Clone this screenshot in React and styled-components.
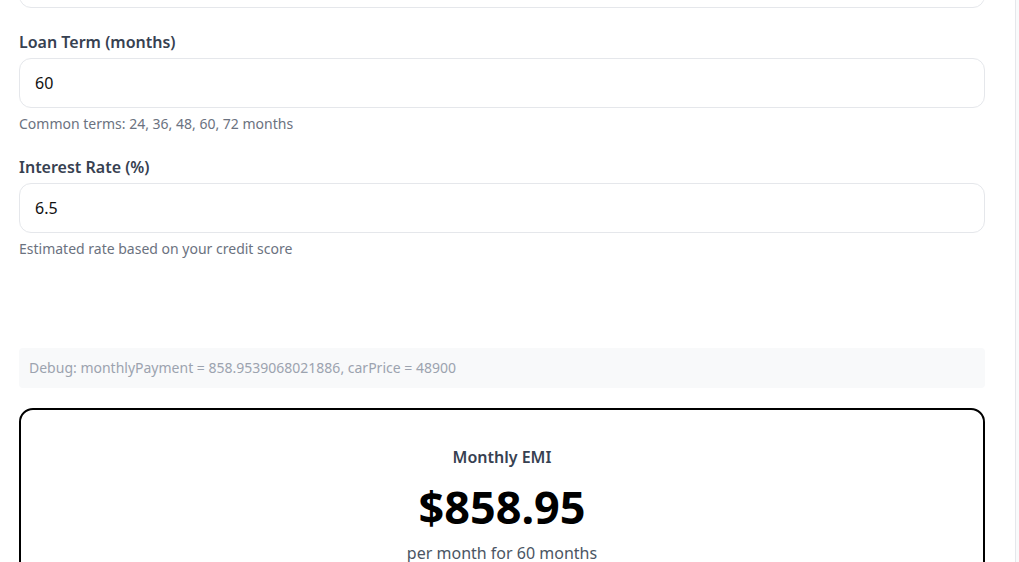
import React from 'react';
import styled, { createGlobalStyle } from 'styled-components';

const GlobalStyle = createGlobalStyle`
  * {
    box-sizing: border-box;
  }
  body {
    margin: 0;
    background: #f9fafb;
    font-family: "Noto Sans", "Open Sans", Arial, sans-serif;
    color: #111827;
  }
`;

const Panel = styled.div`
  width: 1016px;
  min-height: 100vh;
  background: #ffffff;
  border-right: 1px solid #e5e7eb;
  padding: 0 30px 40px 19px;
  overflow: hidden;
`;

const Field = styled.div`
  display: flex;
  flex-direction: column;
  margin-top: ${p => (p.$clipped ? '-42px' : '0')};
  margin-bottom: ${p => p.$gap || '21px'};
`;

const Label = styled.label`
  font-size: 16px;
  line-height: 24px;
  font-weight: 600;
  color: #374151;
  margin-bottom: 4px;
`;

const Input = styled.input`
  width: 100%;
  height: 50px;
  padding: 0 15px;
  font-family: inherit;
  font-size: 16px;
  color: #111111;
  background: #ffffff;
  border: 1px solid #e5e7eb;
  border-radius: 12px;
  outline: none;
`;

const Hint = styled.div`
  margin-top: 6px;
  font-size: 14px;
  line-height: 20px;
  color: #6b7280;
`;

const Debug = styled.div`
  background: #f8f9fa;
  border-radius: 4px;
  padding: 10px;
  font-size: 14px;
  line-height: 20px;
  color: #9ca3af;
  margin-bottom: 20px;
`;

const ResultCard = styled.div`
  border: 2px solid #000000;
  border-radius: 14px;
  padding: 35px 24px 32px;
  display: flex;
  flex-direction: column;
  align-items: center;
  text-align: center;
`;

const ResultLabel = styled.div`
  font-size: 16px;
  line-height: 24px;
  font-weight: 600;
  color: #374151;
`;

const Amount = styled.div`
  font-size: 45px;
  line-height: 56px;
  font-weight: 700;
  color: #000000;
  margin-top: 10px;
`;

const Sub = styled.div`
  font-size: 16px;
  line-height: 24px;
  color: #4b5563;
  margin-top: 6px;
`;

const fields = [
  { label: 'Loan Term (months)', value: '60', hint: 'Common terms: 24, 36, 48, 60, 72 months', gap: '21px' },
  { label: 'Interest Rate (%)', value: '6.5', hint: 'Estimated rate based on your credit score', gap: '89px' },
];

const App = () => {
  const monthlyPayment = 858.9539068021886;
  const carPrice = 48900;

  return (
    <>
      <GlobalStyle />
      <Panel>
        <Field $clipped $gap="22px">
          <Input defaultValue="10000" readOnly />
        </Field>
        {fields.map(f => (
          <Field key={f.label} $gap={f.gap}>
            <Label>{f.label}</Label>
            <Input defaultValue={f.value} readOnly />
            <Hint>{f.hint}</Hint>
          </Field>
        ))}
        <Debug>
          Debug: monthlyPayment = {monthlyPayment}, carPrice = {carPrice}
        </Debug>
        <ResultCard>
          <ResultLabel>Monthly EMI</ResultLabel>
          <Amount>${monthlyPayment.toFixed(2)}</Amount>
          <Sub>per month for 60 months</Sub>
        </ResultCard>
      </Panel>
    </>
  );
};

export default App;
